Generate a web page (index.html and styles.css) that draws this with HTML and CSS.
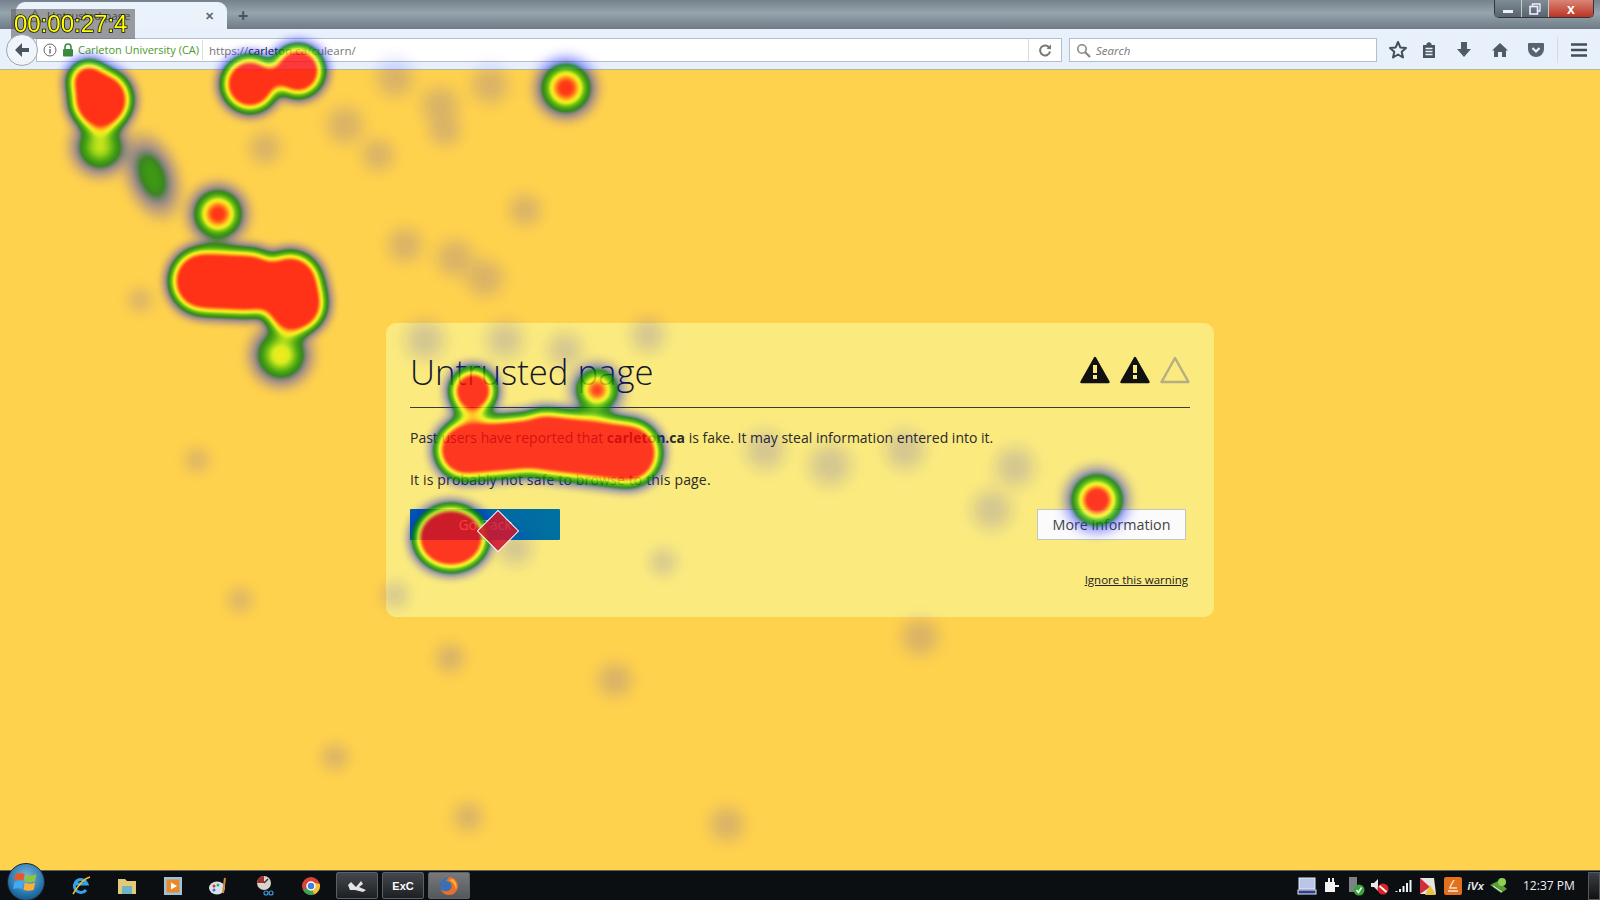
FILE: index.html
```html
<!DOCTYPE html>
<html lang="en">
<head>
    <meta charset="UTF-8">
    <title>Untrusted page</title>
    <link rel="stylesheet" href="styles.css">
</head>
<body>
<div class="screen">
    <!-- tab strip -->
    <div class="tabbar">
        <div class="tab">
            <svg class="tab-icon" width="14" height="14" viewBox="0 0 14 14"><path d="M7 1.5 L13 12.5 H1 Z" fill="none" stroke="#777" stroke-width="1.5"/></svg>
            <span class="tab-title">Untrusted page</span>
            <span class="tab-close">&#10005;</span>
        </div>
        <span class="tab-new">+</span>
        <div class="window-buttons">
            <span class="win-btn"><i class="win-min"></i></span>
            <span class="win-btn">
                <svg width="12" height="12" viewBox="0 0 12 12"><path d="M3.5 3 V1 H11 V8 H9" fill="none" stroke="#eef" stroke-width="1.3"/><rect x="1" y="3.5" width="7.5" height="7.5" fill="none" stroke="#eef" stroke-width="1.6"/></svg>
            </span>
            <span class="win-btn win-close">x</span>
        </div>
    </div>

    <!-- address bar and toolbar -->
    <div class="navbar">
        <div class="back-btn">
            <svg width="18" height="18" viewBox="0 0 18 18"><path d="M9 2 L2 9 L9 16 L9 11 L16 11 L16 7 L9 7 Z" fill="#4a5560"/></svg>
        </div>
        <div class="urlbar">
            <svg class="info-icon" width="14" height="14" viewBox="0 0 14 14"><circle cx="7" cy="7" r="6" fill="none" stroke="#666" stroke-width="1"/><rect x="6.3" y="6" width="1.4" height="4.5" fill="#666"/><rect x="6.3" y="3.5" width="1.4" height="1.5" fill="#666"/></svg>
            <svg class="lock-icon" width="12" height="14" viewBox="0 0 12 14"><path d="M3 6 V4 a3 3 0 0 1 6 0 V6" fill="none" stroke="#3d8b3d" stroke-width="1.6"/><rect x="1" y="6" width="10" height="7.5" rx="1" fill="#3d8b3d"/></svg>
            <span class="identity">Carleton University (CA)</span>
            <span class="url">https://<b>carleton.ca</b>/culearn/</span>
            <span class="reload">
                <svg width="14" height="14" viewBox="0 0 14 14"><path d="M11.5 5 A5 5 0 1 0 12 8.5" fill="none" stroke="#777" stroke-width="2"/><path d="M8.5 5.8 L13 6.2 L13 1.6 Z" fill="#777"/></svg>
            </span>
        </div>
        <div class="searchbar">
            <svg width="15" height="15" viewBox="0 0 15 15"><circle cx="6" cy="6" r="4.2" fill="none" stroke="#888" stroke-width="1.6"/><path d="M9 9 L14 14" stroke="#888" stroke-width="2.2"/></svg>
            <span>Search</span>
        </div>
        <div class="tools">
            <svg class="tool-star" width="20" height="20" viewBox="0 0 20 20"><path d="M10 2 L12.3 7.4 L18 7.9 L13.7 11.7 L15 17.5 L10 14.5 L5 17.5 L6.3 11.7 L2 7.9 L7.7 7.4 Z" fill="none" stroke="#434d57" stroke-width="2" stroke-linejoin="round"/></svg>
            <svg class="tool-reader" width="16" height="18" viewBox="0 0 16 18"><path d="M2 4 H5.5 V2.5 L8 1 L10.5 2.5 V4 H14 V17 H2 Z" fill="#4a5560"/><path d="M4.5 7.5 H11.5 M4.5 10.5 H11.5 M4.5 13.5 H11.5" stroke="#e9f1fb" stroke-width="1.3"/></svg>
            <svg class="tool-down" width="16" height="18" viewBox="0 0 16 18"><path d="M5 1 H11 V8 H15 L8 16 L1 8 H5 Z" fill="#4f5b66"/></svg>
            <svg class="tool-home" width="18" height="18" viewBox="0 0 18 18"><path d="M9 2 L17 9.5 L15 9.5 L15 16 L11 16 L11 11 L7 11 L7 16 L3 16 L3 9.5 L1 9.5 Z" fill="#4f5b66"/></svg>
            <svg class="tool-pocket" width="18" height="18" viewBox="0 0 18 18"><path d="M2 2 H16 a1 1 0 0 1 1 1 V8 a8 8 0 0 1 -16 0 V3 a1 1 0 0 1 1 -1 Z" fill="#566370"/><path d="M5.5 7 L9 10.5 L12.5 7" fill="none" stroke="#e9f1fb" stroke-width="2.2"/></svg>
            <span class="tool-sep"></span>
            <svg class="tool-menu" width="18" height="16" viewBox="0 0 18 16"><path d="M1 2.5 H17 M1 8 H17 M1 13.5 H17" stroke="#434d57" stroke-width="2.5"/></svg>
        </div>
    </div>

    <!-- warning page -->
    <div class="page">
        <div class="card">
            <div class="card-head">
                <h1>Untrusted page</h1>
                <div class="ratings">
                    <svg width="30" height="28" viewBox="0 0 30 28"><path d="M15 2 L28.5 26 H1.5 Z" fill="#111" stroke="#111" stroke-width="2.5" stroke-linejoin="round"/><rect x="13" y="9" width="4" height="8" fill="#fbeb7e"/><rect x="13" y="19" width="4" height="4" fill="#fbeb7e"/></svg>
                    <svg width="30" height="28" viewBox="0 0 30 28"><path d="M15 2 L28.5 26 H1.5 Z" fill="#111" stroke="#111" stroke-width="2.5" stroke-linejoin="round"/><rect x="13" y="9" width="4" height="8" fill="#fbeb7e"/><rect x="13" y="19" width="4" height="4" fill="#fbeb7e"/></svg>
                    <svg width="30" height="28" viewBox="0 0 30 28"><path d="M15 2 L28.5 26 H1.5 Z" fill="none" stroke="#b5ae85" stroke-width="2.5" stroke-linejoin="round"/></svg>
                </div>
            </div>
            <p class="line">Past users have reported that <b>carleton.ca</b> is fake. It may steal information entered into it.</p>
            <p class="line line-second">It is probably not safe to browse to this page.</p>
            <div class="actions">
                <button class="btn-back">Go Back</button>
                <button class="btn-more">More information</button>
            </div>
            <div class="ignore-row"><a class="ignore" href="#">Ignore this warning</a></div>
        </div>
    </div>

    <!-- windows taskbar -->
    <div class="taskbar">
        <div class="orb">
            <svg width="26" height="26" viewBox="0 0 20 20"><path d="M2 4 Q6 2 9 4 L8 9 Q5 7.5 1 9 Z" fill="#e8572a"/><path d="M10 4.5 Q13 6 18 4 L17 9.5 Q13 11 9 9.5 Z" fill="#8cc63f"/><path d="M1 10 Q5 8.5 8 10 L7 15.5 Q4 14 0 15.5 Z" fill="#3fa9f5"/><path d="M9 10.5 Q13 12 17 10.5 L16 16 Q12 17.5 8 16 Z" fill="#fbb03b"/></svg>
        </div>
        <div class="task-icons">
            <span class="task-slot"><svg width="22" height="22" viewBox="0 0 22 22"><path d="M16 15 A6.5 6.5 0 1 1 17 9 H6" fill="none" stroke="#35a3e8" stroke-width="3"/><path d="M3 19 Q12 4 20 2" fill="none" stroke="#f2c230" stroke-width="1.5"/></svg></span>
            <span class="task-slot"><svg width="22" height="20" viewBox="0 0 22 20"><path d="M2 3 H9 L11 5 H20 V18 H2 Z" fill="#e3c878"/><rect x="6" y="10" width="10" height="8" fill="#6fb3c9"/></svg></span>
            <span class="task-slot"><svg width="20" height="20" viewBox="0 0 20 20"><rect x="1" y="1" width="18" height="18" fill="#9cc3dc"/><rect x="3.5" y="3.5" width="13" height="13" fill="#e8892b"/><path d="M8 6.5 L14 10 L8 13.5 Z" fill="#fff"/></svg></span>
            <span class="task-slot"><svg width="22" height="20" viewBox="0 0 22 20"><ellipse cx="9" cy="12" rx="8" ry="6.5" fill="#d8e2ea"/><circle cx="6" cy="10" r="1.5" fill="#d33"/><circle cx="10" cy="9" r="1.5" fill="#3a7"/><circle cx="6" cy="14" r="1.5" fill="#37c"/><path d="M17 2 L15 17" stroke="#c98a3a" stroke-width="2"/></svg></span>
            <span class="task-slot"><svg width="22" height="22" viewBox="0 0 22 22"><circle cx="10" cy="8" r="7" fill="#d9d3cd"/><path d="M3 8 A7 7 0 0 1 10 1 L10 8 Z" fill="#a52f2a"/><path d="M10 8 L14 4" stroke="#333" stroke-width="1.5"/><circle cx="12" cy="18" r="2" fill="none" stroke="#3a9ad9" stroke-width="1.2"/><circle cx="17" cy="18" r="2" fill="none" stroke="#3a9ad9" stroke-width="1.2"/></svg></span>
            <span class="task-slot"><svg width="20" height="20" viewBox="0 0 20 20"><circle cx="10" cy="10" r="9" fill="#d9433a"/><path d="M10 10 L2 14 A9 9 0 0 0 13 18.5 Z" fill="#3aa655"/><path d="M10 10 L13 18.5 A9 9 0 0 0 18.8 8 L10 6 Z" fill="#f2c230"/><circle cx="10" cy="10" r="4" fill="#3f7fe0" stroke="#fff" stroke-width="1.5"/></svg></span>
        </div>
        <div class="task-btns">
            <span class="task-btn"><svg width="22" height="16" viewBox="0 0 22 16"><path d="M2 7 L5 4 L10 9 L15 3 L17 6 L13 9 L20 12 L17 14 L9 12 L4 12 Z" fill="#e4e4e4"/></svg></span>
            <span class="task-btn"><b class="exc">ExC</b></span>
            <span class="task-btn task-btn-on"><svg width="20" height="20" viewBox="0 0 20 20"><circle cx="10" cy="10" r="9" fill="#3d6fb5"/><path d="M10 1 A9 9 0 1 1 1.5 13 Q4 16 9 15 Q14 13 12 8 Q11 5 7 5 Q9 2 10 1 Z" fill="#e8702a"/><path d="M14 3 Q19 8 17 13 Q15 6 10 4 Z" fill="#f5b52e"/></svg></span>
        </div>
        <div class="tray">
            <svg width="20" height="20" viewBox="0 0 20 20"><rect x="2" y="2" width="16" height="11" fill="#b9c6e8" stroke="#e6ecf8"/><rect x="1" y="14" width="18" height="4" fill="#2f3f90" stroke="#e6ecf8"/></svg>
            <svg width="18" height="18" viewBox="0 0 18 18"><path d="M3 5 H13 V15 H3 Z" fill="#f2f2f2"/><path d="M7 1 V6 M11 1 V6 M13 9 H17" stroke="#f2f2f2" stroke-width="2"/></svg>
            <svg width="20" height="20" viewBox="0 0 20 20"><rect x="4" y="1" width="8" height="15" fill="#7d8286"/><circle cx="14" cy="14" r="5.5" fill="#3aa63a"/><path d="M11.5 14 L13.5 16.5 L16.5 11.5" fill="none" stroke="#fff" stroke-width="1.5"/></svg>
            <svg width="20" height="20" viewBox="0 0 20 20"><path d="M1 7 H4 L8 3 V15 L4 11 H1 Z" fill="#e8e8e8"/><circle cx="13" cy="13" r="5.5" fill="#d8232a"/><path d="M9.5 10 L16.5 16" stroke="#fff" stroke-width="1.8"/></svg>
            <svg width="18" height="16" viewBox="0 0 18 16"><path d="M1.5 14 V13 M5 14 V11 M8.5 14 V8 M12 14 V5 M15.5 14 V2" stroke="#f2f2f2" stroke-width="2"/></svg>
            <svg width="20" height="20" viewBox="0 0 20 20"><path d="M2 2 H16 L18 18 H2 Z" fill="#e8e4e0"/><path d="M2 2 L12 11 L2 18 Z" fill="#cf2e3a"/><path d="M12 9 L18 19 H7 Z" fill="#e8c33c"/></svg>
            <svg width="20" height="20" viewBox="0 0 20 20"><rect x="1" y="1" width="18" height="18" rx="2" fill="#e2701d"/><path d="M5 15 H15 M6 12 H14 M11 4 L7 11" stroke="#f7e3cf" stroke-width="1.5"/></svg>
            <span class="tray-ivx">iVx</span>
            <svg width="20" height="18" viewBox="0 0 20 18"><path d="M1 8 L9 4 L18 12 L12 16 Z" fill="#5c9c3c"/><circle cx="13" cy="5" r="4" fill="#8fd14f"/><path d="M4 9 L13 15" stroke="#dfe" stroke-width="1"/></svg>
        </div>
        <span class="clock">12:37 PM</span>
        <span class="show-desktop"></span>
    </div>
</div>

<!-- gaze heatmap drawn over the whole window -->
<svg class="heatmap" width="1600" height="900" viewBox="0 0 1600 900">
    <defs>
        <radialGradient id="spot">
            <stop offset="0" stop-color="#000" stop-opacity="1"/>
            <stop offset=".35" stop-color="#000" stop-opacity="1"/>
            <stop offset=".5" stop-color="#000" stop-opacity=".7"/>
            <stop offset=".7" stop-color="#000" stop-opacity=".3"/>
            <stop offset="1" stop-color="#000" stop-opacity="0"/>
        </radialGradient>
        <filter id="heat" filterUnits="userSpaceOnUse" x="0" y="0" width="1600" height="900" color-interpolation-filters="sRGB">
            <feGaussianBlur in="SourceAlpha" stdDeviation="7"/>
            <feColorMatrix type="matrix" values="0 0 0 1 0  0 0 0 1 0  0 0 0 1 0  0 0 0 1 0"/>
            <feComponentTransfer>
                <feFuncR type="table" tableValues="0 0 0 .02 .03 .04 .04 .04 .1 .2 .35 .55 .8 .95 1 1 1 1 1 1 1"/>
                <feFuncG type="table" tableValues="0 0 .05 .1 .2 .3 .45 .53 .58 .66 .74 .84 .95 .94 .82 .6 .35 .1 .04 .04 .04"/>
                <feFuncB type="table" tableValues="1 1 1 .9 .75 .4 .1 .03 .02 .02 .03 .05 .07 .07 .07 .07 .05 .04 .04 .04 .04"/>
                <feFuncA type="table" tableValues="0 .12 .22 .32 .45 .6 .8 .8 .8 .8 .8 .8 .8 .8 .8 .8 .8 .8 .8 .8 .8"/>
            </feComponentTransfer>
        </filter>
    </defs>
    <g filter="url(#heat)" fill="#000" stroke-linecap="round" stroke-linejoin="round">
        <!-- strong fixations, solid shapes -->
        <circle cx="101" cy="100" r="30"/>
        <circle cx="89" cy="82" r="20"/>
        <circle cx="250" cy="84" r="27"/>
        <circle cx="298" cy="71" r="25"/>
        <path d="M203 281 L250 283" stroke="#000" stroke-width="64" fill="none"/>
        <path d="M290 284 L294 303" stroke="#000" stroke-width="62" fill="none"/>
        <circle cx="473" cy="391" r="22"/>
        <path d="M465 450 L545 443" stroke="#000" stroke-width="57" fill="none"/>
        <path d="M545 443 L628 453" stroke="#000" stroke-width="64" fill="none"/>
        <ellipse cx="451" cy="538" rx="36" ry="32"/>
        <!-- small fixations, soft spots -->
        <circle cx="566" cy="88" r="33" fill="url(#spot)" opacity=".92"/>
        <circle cx="218" cy="214" r="32" fill="url(#spot)" opacity=".92"/>
        <circle cx="597" cy="390" r="28" fill="url(#spot)" opacity=".92"/>
        <circle cx="1097" cy="500" r="34" fill="url(#spot)"/>
        <circle cx="100" cy="147" r="33" fill="url(#spot)" opacity=".6"/>
        <circle cx="281" cy="355" r="35" fill="url(#spot)" opacity=".66"/>
        <circle cx="470" cy="415" r="22" fill="url(#spot)" opacity=".45"/>
        <ellipse cx="152" cy="176" rx="28" ry="50" transform="rotate(-20 152 176)" fill="url(#spot)" opacity=".38"/>
        <!-- faint fixations -->
        <g opacity=".065">
            <circle cx="265" cy="148" r="24" fill="url(#spot)"/><circle cx="345" cy="125" r="28" fill="url(#spot)"/><circle cx="378" cy="155" r="24" fill="url(#spot)"/>
            <circle cx="440" cy="105" r="28" fill="url(#spot)"/><circle cx="445" cy="130" r="24" fill="url(#spot)"/><circle cx="490" cy="85" r="28" fill="url(#spot)"/>
            <circle cx="395" cy="78" r="28" fill="url(#spot)"/><circle cx="525" cy="210" r="24" fill="url(#spot)"/><circle cx="405" cy="245" r="26" fill="url(#spot)"/>
            <circle cx="455" cy="258" r="28" fill="url(#spot)"/><circle cx="485" cy="278" r="28" fill="url(#spot)"/><circle cx="140" cy="300" r="18" fill="url(#spot)"/>
            <circle cx="425" cy="340" r="30" fill="url(#spot)"/><circle cx="505" cy="340" r="28" fill="url(#spot)"/><circle cx="565" cy="350" r="26" fill="url(#spot)"/>
            <circle cx="648" cy="335" r="26" fill="url(#spot)"/><circle cx="197" cy="460" r="18" fill="url(#spot)"/><circle cx="765" cy="450" r="30" fill="url(#spot)"/>
            <circle cx="830" cy="465" r="32" fill="url(#spot)"/><circle cx="905" cy="450" r="30" fill="url(#spot)"/><circle cx="1015" cy="467" r="30" fill="url(#spot)"/>
            <circle cx="992" cy="510" r="30" fill="url(#spot)"/><circle cx="515" cy="548" r="26" fill="url(#spot)"/><circle cx="663" cy="562" r="20" fill="url(#spot)"/>
            <circle cx="240" cy="600" r="18" fill="url(#spot)"/><circle cx="395" cy="595" r="20" fill="url(#spot)"/><circle cx="920" cy="637" r="28" fill="url(#spot)"/>
            <circle cx="450" cy="658" r="22" fill="url(#spot)"/><circle cx="615" cy="680" r="26" fill="url(#spot)"/><circle cx="335" cy="757" r="20" fill="url(#spot)"/>
            <circle cx="468" cy="817" r="22" fill="url(#spot)"/><circle cx="727" cy="824" r="26" fill="url(#spot)"/>
        </g>
    </g>
</svg>

<div class="cursor-mark"></div>
<div class="timer">00:00:27:4</div>
</body>
</html>
```

FILE: styles.css
```css
html, body {
    margin: 0;
    height: 100%;
    overflow: hidden;
}

body {
    font-family: "Open Sans", "Liberation Sans", sans-serif;
    background-color: #ffd24d;
}

.screen {
    display: flex;
    flex-direction: column;
    height: 100vh;
}

/* tab strip */
.tabbar {
    display: flex;
    align-items: flex-end;
    height: 29px;
    padding-left: 16px;
    background: linear-gradient(#75828d, #95a4ad 45%, #6e7b86);
    flex: none;
}

.tab {
    display: flex;
    align-items: center;
    box-sizing: border-box;
    width: 211px;
    height: 27px;
    padding: 0 13px 0 12px;
    background: #eaf2fb;
    border-radius: 9px 9px 0 0;
    font-size: 11.5px;
    color: #222;
}

.tab-icon {
    margin-right: 5px;
}

.tab-close {
    margin-left: auto;
    font-size: 11px;
    color: #666;
    font-weight: bold;
}

.tab-new {
    align-self: center;
    margin-left: 11px;
    font-size: 18px;
    line-height: 20px;
    color: #49545e;
    font-weight: bold;
}

.window-buttons {
    display: flex;
    align-self: flex-start;
    margin-left: auto;
    margin-right: 6px;
    height: 17px;
    border: 1px solid #30363b;
    border-top: none;
    border-radius: 0 0 5px 5px;
    overflow: hidden;
}

.win-btn {
    display: flex;
    justify-content: center;
    align-items: center;
    width: 26px;
    height: 17px;
    background: linear-gradient(#7f8c96, #57636d);
    border-right: 1px solid #c4ccd2;
}

.win-close {
    width: 44px;
    border-right: none;
    background: linear-gradient(#d98676, #bb3322);
    color: #fff;
    font: bold 14px "Liberation Sans", sans-serif;
}

.win-min {
    width: 10px;
    height: 3px;
    margin-top: 5px;
    background: #eef;
}

/* address bar */
.navbar {
    display: flex;
    align-items: center;
    box-sizing: border-box;
    height: 41px;
    padding: 2px 0 0 6px;
    background: #e8f1fb;
    border-bottom: 1px solid #b9b6a0;
    flex: none;
}

.back-btn {
    position: relative;
    z-index: 1;
    display: flex;
    justify-content: center;
    align-items: center;
    width: 30px;
    height: 30px;
    background: #f0f5fb;
    border: 1px solid #9aa5b0;
    border-radius: 50%;
}

.urlbar {
    display: flex;
    align-items: center;
    box-sizing: border-box;
    width: 1026px;
    height: 24px;
    margin-left: -2px;
    padding-left: 6px;
    background: #fff;
    border: 1px solid #b4bfcc;
    font-size: 12px;
}

.info-icon {
    margin-right: 5px;
}

.lock-icon {
    margin-right: 4px;
}

.identity {
    width: 124px;
    color: #4c9a2a;
    font-size: 11px;
    border-right: 1px solid #ddd;
    line-height: 20px;
    white-space: nowrap;
}

.url {
    margin-left: 6px;
    font-size: 11.5px;
    color: #777;
}

.url b {
    font-weight: normal;
    color: #111;
}

.reload {
    display: flex;
    justify-content: center;
    align-items: center;
    width: 32px;
    height: 22px;
    margin-left: auto;
    background: #fff;
    border-left: 1px solid #ddd;
}

.searchbar {
    display: flex;
    align-items: center;
    gap: 5px;
    box-sizing: border-box;
    width: 308px;
    height: 24px;
    margin-left: 7px;
    padding-left: 6px;
    background: #fff;
    border: 1px solid #b4bfcc;
    font-size: 11.5px;
    font-style: italic;
    color: #777;
}

.tools {
    display: flex;
    align-items: center;
    margin-left: 11px;
}

.tool-reader {
    margin-left: 13px;
}

.tool-down {
    margin-left: 19px;
}

.tool-home {
    margin-left: 19px;
}

.tool-pocket {
    margin-left: 18px;
}

.tool-sep {
    width: 1px;
    height: 26px;
    margin-left: 12px;
    background: #d3dce6;
}

.tool-menu {
    margin-left: 12px;
}

/* warning page */
.page {
    display: flex;
    flex: 1;
    justify-content: center;
    align-items: center;
    background: #ffd24d;
}

.card {
    box-sizing: border-box;
    width: 828px;
    height: 294px;
    padding: 0 24px;
    background: #fbeb7e;
    border-radius: 10px;
    color: #2a2a2a;
}

.card-head {
    display: flex;
    justify-content: space-between;
    align-items: center;
    height: 84px;
    border-bottom: 1px solid #3a3a3a;
}

h1 {
    margin: 12px 0 0;
    font-size: 34.7px;
    font-weight: 300;
    color: #15182a;
}

.ratings {
    display: flex;
    gap: 10px;
    margin-top: 10px;
}

.line {
    margin: 20px 0;
    font-size: 14px;
    line-height: 21px;
}

.line:first-of-type {
    margin-top: 19px;
}

.line-second {
    margin-top: 21px;
    letter-spacing: 0.16px;
}

.actions {
    display: flex;
    justify-content: space-between;
    margin-top: -1px;
    padding-right: 4px;
}

.btn-back {
    width: 150px;
    height: 31px;
    background: linear-gradient(90deg, #005faa, #0070a0);
    border: none;
    border-radius: 1px;
    font: 14px "Open Sans", sans-serif;
    color: #fff;
}

.btn-more {
    width: 149px;
    height: 31px;
    background: #fbfbfb;
    border: 1px solid #c4c4c4;
    font: 14.3px "Open Sans", sans-serif;
    color: #444;
}

.ignore-row {
    margin-top: 32px;
    padding-right: 2px;
    text-align: right;
    font-size: 11.5px;
}

.ignore {
    color: #222;
}

/* taskbar */
.taskbar {
    display: flex;
    align-items: center;
    box-sizing: border-box;
    height: 30px;
    padding-left: 7px;
    background: #0c0f12;
    border-top: 1px solid #5a5f5f;
    flex: none;
}

.orb {
    display: flex;
    justify-content: center;
    align-items: center;
    width: 38px;
    height: 38px;
    margin-top: -8px;
    border-radius: 50%;
    background: radial-gradient(circle at 50% 35%, #7ab8dc, #1f6fa5 65%, #0a3a5c);
    border: 1px solid #223;
    box-sizing: border-box;
}

.task-icons {
    display: flex;
    margin-left: 13px;
}

.task-slot {
    display: flex;
    justify-content: center;
    align-items: center;
    width: 46px;
    height: 28px;
}

.task-btns {
    display: flex;
    gap: 4px;
    margin-left: 2px;
}

.task-btn {
    display: flex;
    justify-content: center;
    align-items: center;
    box-sizing: border-box;
    width: 42px;
    height: 27px;
    background: linear-gradient(#44484c, #1d2023);
    border: 1px solid #5c6064;
    border-radius: 2px;
}

.task-btn-on {
    background: linear-gradient(#77797b, #55585b);
}

.exc {
    font: bold 11px "Liberation Sans", sans-serif;
    color: #fff;
}

.tray {
    display: flex;
    align-items: center;
    justify-content: space-between;
    width: 212px;
    margin-left: auto;
}

.tray-ivx {
    font: bold italic 11px "Liberation Sans", sans-serif;
    color: #e8e8e8;
}

.clock {
    margin-left: 14px;
    font-size: 12px;
    color: #eef0f2;
    width: 49px;
    white-space: nowrap;
}

.show-desktop {
    width: 12px;
    height: 28px;
    margin-left: 16px;
    background: linear-gradient(#3a3f44, #111);
    border: 1px solid #55595c;
    box-sizing: border-box;
}

/* overlays */
.heatmap {
    position: absolute;
    top: 0;
    left: 0;
    pointer-events: none;
}

.cursor-mark {
    position: absolute;
    top: 516px;
    left: 483px;
    width: 28px;
    height: 28px;
    background: rgba(208, 22, 44, 0.88);
    border: 1px solid #fff;
    transform: rotate(45deg);
}

.timer {
    position: absolute;
    top: 9px;
    left: 11px;
    box-sizing: border-box;
    width: 124px;
    height: 30px;
    padding-left: 3px;
    background: rgba(96, 96, 96, 0.6);
    font: 24px/29px "Liberation Sans", sans-serif;
    color: #ffff00;
    -webkit-text-stroke: 1.6px #111;
    paint-order: stroke fill;
    white-space: nowrap;
}
```
